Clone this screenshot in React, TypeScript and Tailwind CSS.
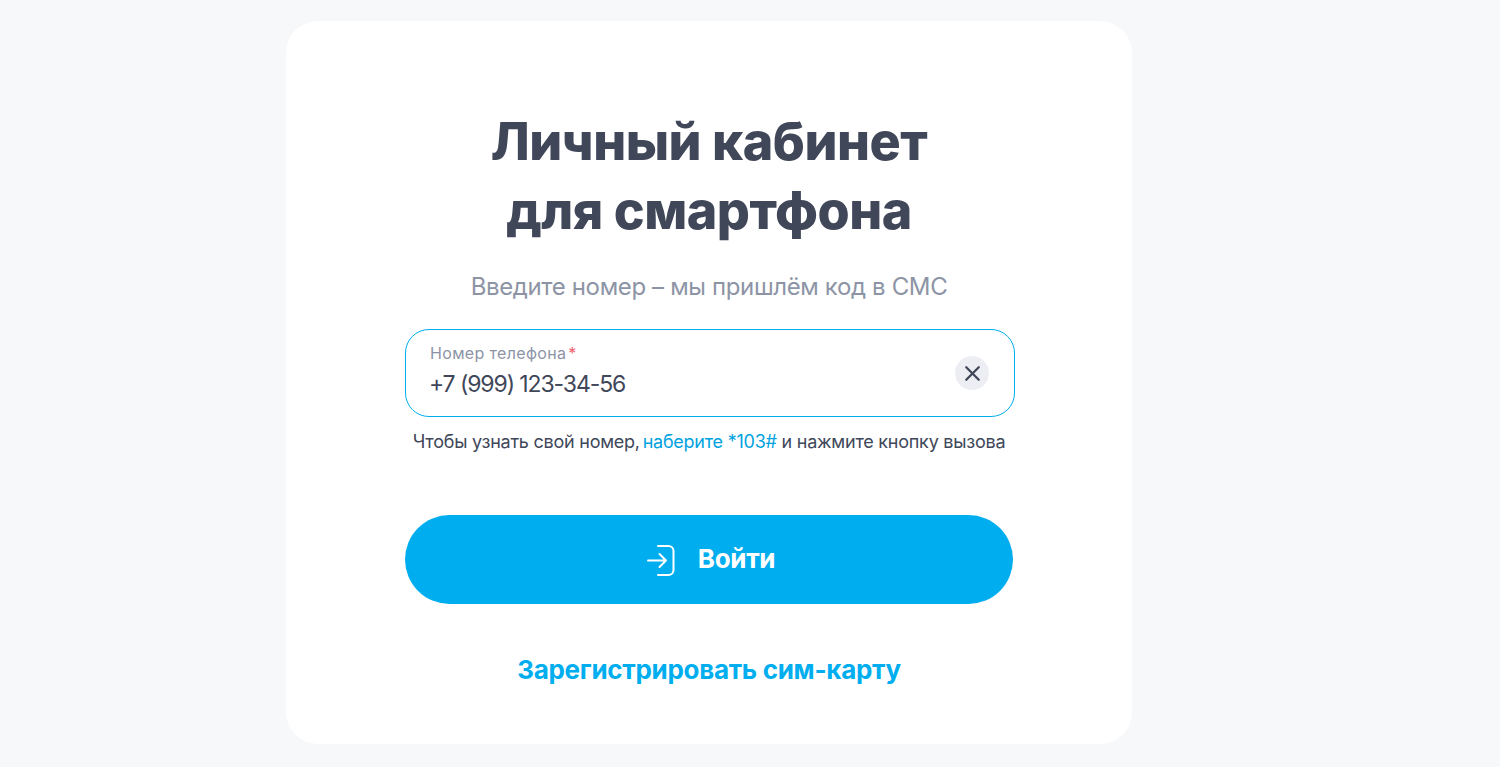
import { X } from 'lucide-react'

export default function App() {
    return (
        <div className="h-[767px] overflow-hidden bg-[#f7f8fa] pt-[21px] pl-[286px] font-['Inter',sans-serif]">
            <div className="flex h-[723px] w-[846px] flex-col items-center rounded-[32px] bg-white pt-[86px]">
                <h1 className="text-center text-[52px] leading-[69px] font-extrabold tracking-[-0.5px] text-[#404759]">
                    Личный кабинет
                    <br />
                    для смартфона
                </h1>
                <p className="mt-[26px] text-[24px] leading-[32px] tracking-[-0.36px] text-[#8d94a5]">
                    Введите номер – мы пришлём код в СМС
                </p>

                <div className="mt-[26px] ml-[2px] flex h-[88px] w-[610px] items-center justify-between rounded-[24px] border border-[#00aeef] pr-[25px] pl-[24px]">
                    <div className="pb-[4px]">
                        <div className="text-[16px] leading-[20px] tracking-[0.35px] text-[#8d94a5]">
                            Номер телефона <span className="-ml-[3px] text-[#f0616d]">*</span>
                        </div>
                        <div className="mt-[5px] -ml-[1px] text-[23px] leading-[32px] tracking-[-1.1px] text-[#404759]">+7 (999) 123-34-56</div>
                    </div>
                    <button className="flex h-[34px] w-[34px] items-center justify-center rounded-full bg-[#eceef4] text-[#404759]">
                        <X size={25} strokeWidth={2.2} />
                    </button>
                </div>

                <p className="mt-[13px] text-[18px] leading-[24px] tracking-[-0.24px] text-[#404759]">
                    Чтобы узнать свой номер, <span className="-ml-[2px] text-[#00a3e0]">наберите *103#</span> и нажмите кнопку вызова
                </p>

                <button className="mt-[61px] flex h-[89px] w-[608px] items-center justify-center gap-[23px] rounded-[45px] bg-[#00aeef] pb-[2px] pl-[4px] text-[26px] font-bold tracking-[-0.3px] text-white">
                    <svg width="28" height="31" viewBox="0 0 28 31" fill="none" stroke="currentColor" strokeWidth="2" strokeLinecap="round" strokeLinejoin="round" className="mt-[3px]">
                        <path d="M11 1h10.5a5 5 0 0 1 5 5v19a5 5 0 0 1-5 5H11" />
                        <path d="M1 15.5h18M12.5 9l6.5 6.5-6.5 6.5" />
                    </svg>
                    Войти
                </button>

                <a className="mt-[48px] text-[26px] leading-[36px] font-bold tracking-[-0.3px] text-[#00aeef]">Зарегистрировать сим-карту</a>
            </div>
        </div>
    )
}
